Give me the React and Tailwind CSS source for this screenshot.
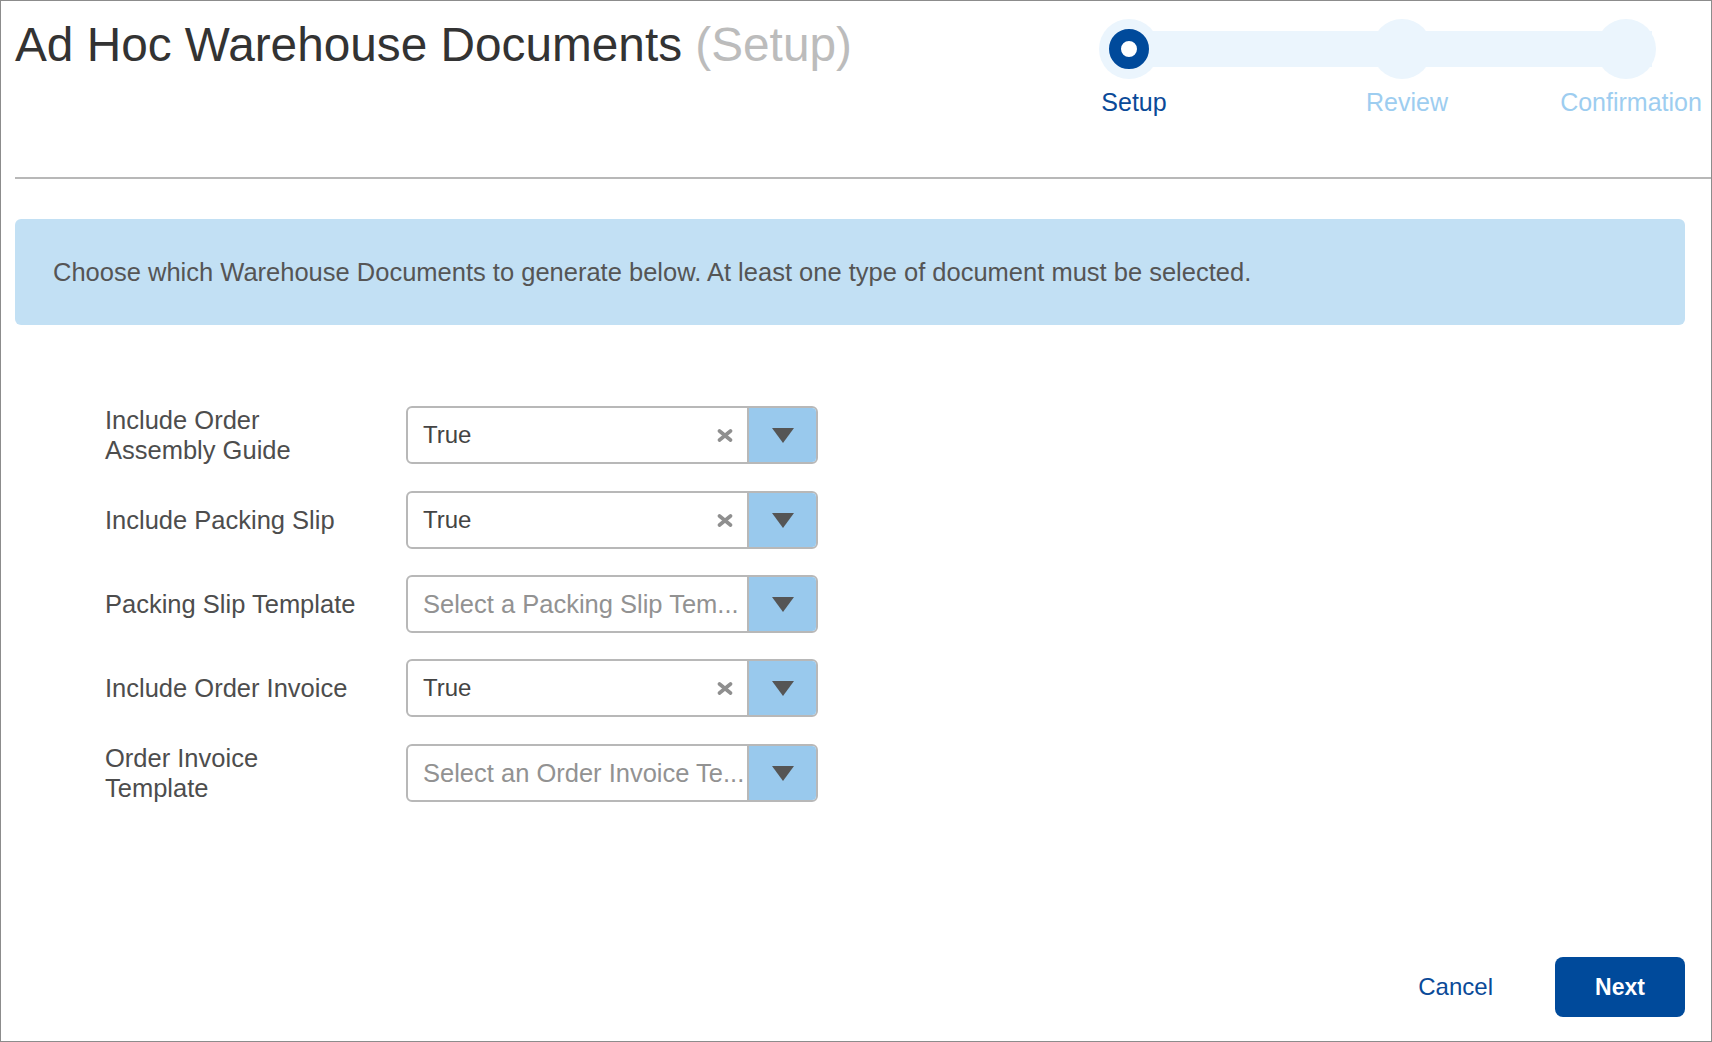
import React from 'react';

const fields = [
  { label: ['Include Order', 'Assembly Guide'], value: 'True' },
  { label: ['Include Packing Slip'], value: 'True' },
  { label: ['Packing Slip Template'], placeholder: 'Select a Packing Slip Tem...' },
  { label: ['Include Order Invoice'], value: 'True' },
  { label: ['Order Invoice', 'Template'], placeholder: 'Select an Order Invoice Te...' },
];

const steps = [
  { name: 'Setup', active: true, gap: 'mr-[213px]' },
  { name: 'Review', active: false, gap: 'mr-[164px]' },
  { name: 'Confirmation', active: false, gap: '' },
];

const Stepper = () => (
  <div className="relative mt-[18px] mr-[55px] flex">
    {/* track behind the circles */}
    <div className="absolute left-[30px] right-[4px] top-[12px] h-[36px] bg-[#ebf5fd]" />
    {steps.map((step) => (
      <div key={step.name} className={`relative flex w-[60px] flex-col items-center ${step.gap}`}>
        <div className="flex h-[60px] w-[60px] items-center justify-center rounded-full bg-[#ebf5fd]">
          {step.active && (
            <div className="h-[40px] w-[40px] rounded-full border-[12px] border-[#004a9b] bg-white" />
          )}
        </div>
        <span
          className={`ml-[10px] mt-[9px] whitespace-nowrap text-[25px] leading-[28px] ${
            step.active ? 'text-[#0a4a98]' : 'text-[#9dcdf0]'
          }`}
        >
          {step.name}
        </span>
      </div>
    ))}
  </div>
);

const SelectBox = ({ value, placeholder }) => (
  <div className="flex h-[58px] w-[412px] overflow-hidden rounded-[6px] border-2 border-[#b8b8b8] bg-white">
    <div className="flex min-w-0 flex-1 items-center pl-[15px] pr-[4px]">
      {value ? (
        <>
          <span className="flex-1 text-[24px] text-[#444]">{value}</span>
          <svg width="16" height="13" viewBox="0 0 16 13" className="mr-[10px]">
            <path d="M2.5 2 L13.5 11 M13.5 2 L2.5 11" stroke="#8f8f8f" strokeWidth="3.6" strokeLinecap="round" />
          </svg>
        </>
      ) : (
        <span className="whitespace-nowrap text-[25.5px] text-[#929292]">{placeholder}</span>
      )}
    </div>
    <div className="flex w-[69px] shrink-0 items-center justify-center border-l-2 border-[#b8b8b8] bg-[#99c9ed]">
      <svg width="22" height="15" viewBox="0 0 22 15">
        <path d="M0 0 H22 L11 15 Z" fill="#555" />
      </svg>
    </div>
  </div>
);

const App = () => {
  return (
    <div className="flex h-[1042px] w-[1712px] flex-col border border-[#8c8c8c] bg-white font-['Liberation_Sans',Arial,sans-serif]">
      {/* Header */}
      <div className="flex h-[176px] items-start justify-between pl-[14px]">
        <h1 className="mt-[16px] whitespace-nowrap text-[47.75px] leading-[56px] text-[#333]">
          Ad Hoc Warehouse Documents <span className="text-[#bcbcbc]">(Setup)</span>
        </h1>
        <Stepper />
      </div>
      <div className="ml-[14px] h-[2px] bg-[#b8b8b8]" />

      {/* Info */}
      <div className="ml-[14px] mr-[26px] mt-[40px] flex h-[106px] items-center rounded-[6px] bg-[#c2e0f4] pl-[38px]">
        <p className="text-[25.5px] text-[#555]">
          Choose which Warehouse Documents to generate below. At least one type of document must be selected.
        </p>
      </div>

      {/* Form */}
      <div className="mt-[80px] flex flex-col gap-[26px] pl-[104px]">
        {fields.map((field) => (
          <div key={field.label.join(' ')} className="flex items-center">
            <div className="w-[301px] text-[25.5px] leading-[30px] text-[#4d4d4d]">
              {field.label.map((line) => (
                <div key={line}>{line}</div>
              ))}
            </div>
            <SelectBox value={field.value} placeholder={field.placeholder} />
          </div>
        ))}
      </div>

      {/* Footer */}
      <div className="mt-auto flex items-center justify-end gap-[62px] pb-[24px] pr-[26px]">
        <button className="text-[24px] text-[#0a4a98]">Cancel</button>
        <button className="h-[60px] w-[130px] rounded-[8px] bg-[#004a9b] text-[23px] font-bold text-white">
          Next
        </button>
      </div>
    </div>
  );
};

export default App;
